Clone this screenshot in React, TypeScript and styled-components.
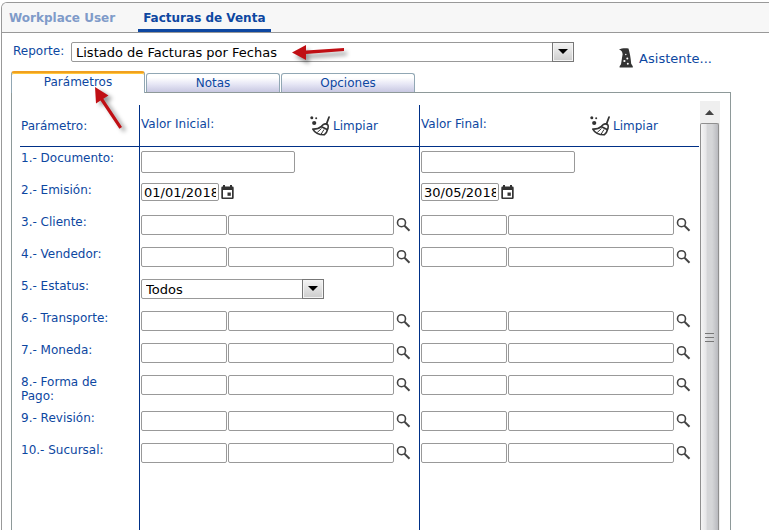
import React from "react";
import styled, { createGlobalStyle } from "styled-components";

const blue = "#0d47a1";
const navy = "#003087";
const grey = "#999999";

const GlobalStyle = createGlobalStyle`
  * { box-sizing: border-box; }
  body {
    margin: 0;
    background: #ffffff;
    color: ${blue};
    font-family: "DejaVu Sans", Verdana, sans-serif;
    font-size: 12px;
    overflow: hidden;
  }
  input, select, button { font-family: inherit; }
`;

const Frame = styled.div`
  display: flex;
  flex-direction: column;
  min-height: calc(100vh - 2px);
  margin: 2px 0 0 1px;
  border: solid ${grey};
  border-width: 1px 0 0 1px;
  border-top-left-radius: 6px;
`;

const TopTabs = styled.nav`
  display: flex;
  height: 30px;
  background: #f7f7f7;
  border-bottom: 1px solid ${grey};
  border-top-left-radius: 5px;
`;

const TopTab = styled.a<{ $active?: boolean }>`
  height: 29px;
  padding: 0 5px;
  margin: 0 16px 0 2px;
  line-height: 30px;
  font-weight: bold;
  text-decoration: none;
  color: ${(p) => (p.$active ? blue : "#7f9bc9")};
  border-bottom: 3px solid ${(p) => (p.$active ? blue : "transparent")};
  border-radius: 3px 3px 0 0;
`;

const ReportBar = styled.div`
  display: flex;
  align-items: flex-start;
  height: 38px;
  padding: 9px 57px 0 11px;
`;

const ReportLabel = styled.label`
  width: 58px;
  line-height: 18px;
`;

const SelectBox = styled.div<{ $narrow?: boolean }>`
  position: relative;
  height: 20px;
  ${(p) => (p.$narrow ? "width: 183px;" : "flex: 1;")}
`;

const Select = styled.select`
  appearance: none;
  display: block;
  width: 100%;
  height: 20px;
  padding: 0 22px 0 4px;
  border: 1px solid ${grey};
  border-radius: 2px;
  background: #ffffff;
  color: #000000;
  font-size: 13px;
`;

const DropArrow = styled.span`
  position: absolute;
  top: 0;
  right: 0;
  display: flex;
  align-items: center;
  justify-content: center;
  width: 22px;
  height: 20px;
  border: 1px solid #777777;
  background: linear-gradient(#f4f4f4, #cccccc);
  box-shadow: inset 0 0 0 1px #f4f4f4;
  pointer-events: none;
`;

const SelectPointer = styled.svg`
  position: absolute;
  left: 220px;
  top: 0;
  pointer-events: none;
  filter: drop-shadow(3px 4px 2px rgba(0, 0, 0, 0.4));
`;

const IconButton = styled.button`
  display: flex;
  align-items: center;
  gap: 3px;
  padding: 0;
  border: 0;
  background: none;
  color: ${blue};
  font-size: 12px;
`;

const Assistant = styled(IconButton)`
  gap: 6px;
  margin: 6px 0 0 45px;
  font-size: 13px;
`;

const Tabs = styled.div`
  display: flex;
  align-items: flex-end;
  gap: 1px;
  height: 21px;
  margin-left: 9px;
`;

const Tab = styled.button<{ $active?: boolean }>`
  position: relative;
  width: 134px;
  height: ${(p) => (p.$active ? 22 : 19)}px;
  margin-bottom: ${(p) => (p.$active ? -1 : 0)}px;
  padding: 0;
  border: 1px solid #91a7b4;
  border-bottom: 0;
  border-radius: 3px 3px 0 0;
  color: ${blue};
  font-size: 12px;
  background: linear-gradient(#ffffff 20%, #e4e4f4 60%, #c8c8e2);
  ${(p) =>
    p.$active &&
    `z-index: 1;
    padding-bottom: 2px;
    border-top: 2px solid #f0a020;
    background: #ffffff;
    box-shadow: inset 0 1px 0 #ffc73c;`}
`;

const TabPointer = styled.svg`
  position: absolute;
  left: 81px;
  top: 13px;
  pointer-events: none;
  filter: drop-shadow(4px 3px 2px rgba(0, 0, 0, 0.4));
`;

const Panel = styled.main`
  display: flex;
  flex: 1;
  margin: 0 38px 0 9px;
  padding: 8px 10px 0 8px;
  border: solid #8e9999;
  border-width: 1px 1px 0;
`;

const Form = styled.form`
  display: flex;
  flex: 1;
  min-width: 0;
  flex-direction: column;
  margin-top: 4px;
`;

const Row = styled.div<{ $kind?: "head" | "first" | "fill" }>`
  display: grid;
  grid-template-columns: 119px minmax(0, 1fr) minmax(0, 1fr);
  min-height: ${(p) => (p.$kind === "first" ? 34 : 32)}px;
  ${(p) => p.$kind === "head" && `height: 42px; border-bottom: 1px solid ${navy};`}
  ${(p) => p.$kind === "fill" && "flex: 1;"}
  > * { padding-top: ${(p) => (p.$kind === "first" ? 4 : 2)}px; }
`;

const Name = styled.label`
  padding-left: 1px;
  padding-right: 24px;
  padding-bottom: 6px;
  line-height: 14px;
`;

const HeadName = styled.span`
  padding-left: 1px;
  line-height: 38px;
`;

const Cell = styled.div`
  display: flex;
  align-items: flex-start;
  gap: 1px;
  padding-left: 1px;
  padding-right: 8px;
  border-left: 1px solid ${navy};
`;

const HeadCell = styled(Cell)`
  justify-content: space-between;
  padding-right: 41px;
  line-height: 34px;
`;

const Clear = styled(IconButton)`
  margin-top: 9px;
`;

const Field = styled.input<{ $kind: "text" | "date" | "code" | "name" }>`
  min-width: 0;
  height: 20px;
  padding: 0 2px;
  border: 1px solid ${grey};
  border-radius: 2px;
  background: #ffffff;
  color: #000000;
  font-size: 13px;
  ${(p) => p.$kind === "text" && "width: 154px; height: 22px;"}
  ${(p) => p.$kind === "date" && "width: 78px; height: 18px;"}
  ${(p) => p.$kind === "code" && "width: 86px;"}
  ${(p) => p.$kind === "name" && "flex: 1;"}
`;

const Glyph = styled.button`
  display: flex;
  width: 16px;
  height: 20px;
  padding: 2px 0 0 1px;
  border: 0;
  background: none;
`;

const Scrollbar = styled.div`
  display: flex;
  flex-direction: column;
  width: 20px;
  margin-left: 1px;
  background: #efefef;
`;

const ScrollUp = styled.button`
  display: flex;
  align-items: center;
  justify-content: center;
  height: 22px;
  padding: 0 2px 0 0;
  border: 0;
  background: none;
`;

const Thumb = styled.div`
  flex: 1;
  width: 19px;
  padding: 208px 0 0 4px;
  border: 1px solid #8f8f8f;
  border-bottom: 0;
  border-radius: 2px 2px 0 0;
  background: linear-gradient(90deg, #f5f5f5, #e6e6e8 30%, #d5d6d8 36%, #d5d6d8 65%, #b9babf);
`;

const Triangle = () => (
  <DropArrow>
    <svg width="10" height="6" aria-hidden="true"><path d="M0 0h10L5 5z" fill="#000" /></svg>
  </DropArrow>
);

const Broom = () => (
  <svg width="20" height="20" viewBox="0 0 20 20" fill="none" stroke="#333" aria-hidden="true">
    <g fill="#333" stroke="none">
      <circle cx="1.8" cy="1.8" r="1.5" />
      <circle cx="6.2" cy="2.2" r="1" />
      <circle cx="4.2" cy="7" r="2.1" />
    </g>
    <path d="M19 1.2l-2.6 7" strokeWidth="1.8" strokeLinecap="round" />
    <path d="M18 12.200C18.800 9.200 17.500 7.600 15 7.900c-2 .2-2.800 1.600-4 2.800C8.800 12.800 6 13.200 2.800 13.100c2 3.600 6.400 5.800 11.400 5.700 2-1.600 3.200-4 3.800-6.600z" strokeWidth="1.6" strokeLinejoin="round" />
    <path d="M11 10.500l6.600 3.200" strokeWidth="1.800" />
    <path d="M11.500 12.500l-4.300 4M14 13.500l-2.800 4.500" strokeWidth="1" />
  </svg>
);

const WizardHat = () => (
  <svg width="14" height="20" viewBox="0 0 14 20" aria-hidden="true">
    <path d="M0 1.400C2.500.2 6.500 0 9.500.5c1.200 4 2.200 9 2.700 15.300l1.600 2.500v1.200H.6v-1.200L2 16.300 3.600 6.300C3.500 3.800 2.500 2.300 0 1.400z" fill="#333" />
    <g fill="#fff">
      <circle cx="6.800" cy="6.500" r=".7" />
      <circle cx="8.300" cy="10.400" r="1" />
      <circle cx="5.400" cy="13" r="1.100" />
      <circle cx="8.800" cy="15.800" r="1" />
    </g>
  </svg>
);

const Magnifier = () => (
  <svg width="15" height="15" viewBox="0 0 15 15" fill="none" stroke="#444" aria-hidden="true">
    <circle cx="5.5" cy="5.7" r="4" strokeWidth="1.6" />
    <path d="M8.5 8.7l5 5" strokeWidth="2" />
  </svg>
);

const Calendar = () => (
  <svg width="13" height="15" viewBox="0 0 13 15" aria-hidden="true">
    <path d="M2 0h2v1.5h5V0h2v1.5h.5q1.200 0 1.200 1.200v10q0 1.300-1.200 1.300h-10Q.3 14 .3 12.700v-10Q.3 1.500 1.500 1.500H2zM2 5v7.400h9V5z" fill="#333" fillRule="evenodd" />
    <path d="M6.500 7.500h3.300v3.300H6.500z" fill="#333" />
  </svg>
);

type Kind = "text" | "date" | "lookup" | "select";

const rows: { id: string; label: string; kind: Kind; values?: [string, string] }[] = [
  { id: "documento", label: "1.- Documento:", kind: "text" },
  { id: "emision", label: "2.- Emisión:", kind: "date", values: ["01/01/2018", "30/05/2018"] },
  { id: "cliente", label: "3.- Cliente:", kind: "lookup" },
  { id: "vendedor", label: "4.- Vendedor:", kind: "lookup" },
  { id: "estatus", label: "5.- Estatus:", kind: "select" },
  { id: "transporte", label: "6.- Transporte:", kind: "lookup" },
  { id: "moneda", label: "7.- Moneda:", kind: "lookup" },
  { id: "pago", label: "8.- Forma de Pago:", kind: "lookup" },
  { id: "revision", label: "9.- Revisión:", kind: "lookup" },
  { id: "sucursal", label: "10.- Sucursal:", kind: "lookup" },
];

function Value({ id, label, kind, value, final }: { id: string; label: string; kind: Kind; value?: string; final?: boolean }) {
  const fieldId = final ? `${id}-final` : id;
  const aria = final ? `${label} valor final` : undefined;
  if (kind === "text") return <Field $kind="text" id={fieldId} aria-label={aria} />;
  if (kind === "date")
    return (
      <>
        <Field $kind="date" id={fieldId} aria-label={aria} defaultValue={value} />
        <Glyph type="button" aria-label="Abrir calendario"><Calendar /></Glyph>
      </>
    );
  if (kind === "select")
    return final ? null : (
      <SelectBox $narrow>
        <Select id={fieldId}><option>Todos</option></Select>
        <Triangle />
      </SelectBox>
    );
  return (
    <>
      <Field $kind="code" id={fieldId} aria-label={aria} />
      <Field $kind="name" aria-label={`${label} descripción`} />
      <Glyph type="button" aria-label={`Buscar ${label}`}><Magnifier /></Glyph>
    </>
  );
}

export default function App() {
  return (
    <>
      <GlobalStyle />
      <Frame>
        <TopTabs>
          <TopTab href="#inicio">Workplace User</TopTab>
          <TopTab href="#facturas" $active>Facturas de Venta</TopTab>
        </TopTabs>
        <ReportBar>
          <ReportLabel htmlFor="reporte">Reporte:</ReportLabel>
          <SelectBox>
            <Select id="reporte"><option>Listado de Facturas por Fechas</option></Select>
            <Triangle />
            <SelectPointer width="56" height="20" aria-hidden="true">
              <path d="M1 10.500L15 3v5.500L53 6v3L15 12v6z" fill="#c00f14" />
            </SelectPointer>
          </SelectBox>
          <Assistant type="button"><WizardHat />Asistente...</Assistant>
        </ReportBar>
        <Tabs>
          <Tab type="button" $active>
            Parámetros
            <TabPointer width="32" height="46" aria-hidden="true">
              <path d="M2 1l13.500 8.500-5.200 3.200L29 41l-2.600 1.800L7.500 14.500 3 17.500z" fill="#c00f14" />
            </TabPointer>
          </Tab>
          <Tab type="button">Notas</Tab>
          <Tab type="button">Opciones</Tab>
        </Tabs>
        <Panel>
          <Form>
            <Row $kind="head">
              <HeadName>Parámetro:</HeadName>
              <HeadCell>Valor Inicial:<Clear type="button"><Broom />Limpiar</Clear></HeadCell>
              <HeadCell>Valor Final:<Clear type="button"><Broom />Limpiar</Clear></HeadCell>
            </Row>
            {rows.map((r, i) => (
              <Row key={r.id} $kind={i === 0 ? "first" : undefined}>
                <Name htmlFor={r.id}>{r.label}</Name>
                <Cell><Value id={r.id} label={r.label} kind={r.kind} value={r.values?.[0]} /></Cell>
                <Cell><Value id={r.id} label={r.label} kind={r.kind} value={r.values?.[1]} final /></Cell>
              </Row>
            ))}
            <Row $kind="fill"><span /><Cell /><Cell /></Row>
          </Form>
          <Scrollbar>
            <ScrollUp type="button" aria-label="Subir">
              <svg width="9" height="5" aria-hidden="true"><path d="M0 5l4.5-5L9 5z" fill="#444" /></svg>
            </ScrollUp>
            <Thumb>
              <svg width="9" height="10" aria-hidden="true" stroke="#777"><path d="M0 .5h9M0 4.500h9M0 8.500h9" /></svg>
            </Thumb>
          </Scrollbar>
        </Panel>
      </Frame>
    </>
  );
}
